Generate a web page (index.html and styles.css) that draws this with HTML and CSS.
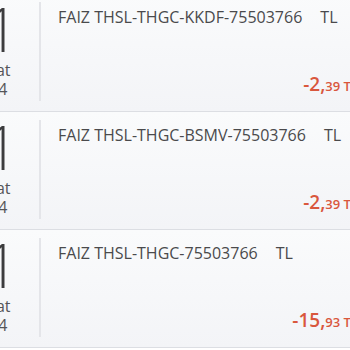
FILE: index.html
```html
<!DOCTYPE html>
<html lang="tr">
<head>
<meta charset="utf-8">
<link rel="stylesheet" href="styles.css">
</head>
<body>
<div class="list">
  <div class="row">
    <div class="date"><span class="day">1</span><span class="month">Şubat</span><span class="year">2024</span></div>
    <div class="divider"></div>
    <div class="content">
      <div class="desc">FAIZ THSL-THGC-KKDF-75503766<span class="cur">TL</span></div>
      <div class="amount"><span class="big">-2,</span><span class="small">39 TL</span></div>
    </div>
  </div>
  <div class="row">
    <div class="date"><span class="day">1</span><span class="month">Şubat</span><span class="year">2024</span></div>
    <div class="divider"></div>
    <div class="content">
      <div class="desc">FAIZ THSL-THGC-BSMV-75503766<span class="cur">TL</span></div>
      <div class="amount"><span class="big">-2,</span><span class="small">39 TL</span></div>
    </div>
  </div>
  <div class="row">
    <div class="date"><span class="day">1</span><span class="month">Şubat</span><span class="year">2024</span></div>
    <div class="divider"></div>
    <div class="content">
      <div class="desc">FAIZ THSL-THGC-75503766<span class="cur">TL</span></div>
      <div class="amount"><span class="big">-15,</span><span class="small">93 TL</span></div>
    </div>
  </div>
</div>
</body>
</html>
```
FILE: styles.css
```css
html, body {
  margin: 0;
  padding: 0;
  background: #ffffff;
  overflow: hidden;
  width: 350px;
  height: 350px;
}
body {
  font-family: "Open Sans", "Noto Sans", sans-serif;
  color: #4a4a4c;
}
.list {
  margin-left: -40px;
  margin-top: -6px;
  width: 400px;
  display: flex;
  flex-direction: column;
}
.row {
  display: flex;
  border-bottom: 1px solid #dcdee3;
  background: linear-gradient(#fafbfc, #f3f4f7);
  box-sizing: border-box;
  height: 118px;
}
.date {
  width: 58px;
  display: flex;
  flex-direction: column;
  align-items: center;
  padding-top: 4px;
  color: #3c3c3e;
}
.day {
  font-size: 60px;
  font-weight: 300;
  line-height: 63px;
  margin-left: 25px;
}
.month, .year {
  font-size: 16px;
  line-height: 19px;
  font-weight: 400;
  color: #555558;
}
.divider {
  width: 2px;
  margin: 8px 0 10px 21px;
  background: #e4e5e9;
}
.content {
  flex: 1;
  display: flex;
  flex-direction: column;
  justify-content: space-between;
  padding: 13px 0 14px 17px;
}
.desc {
  font-size: 16px;
  line-height: 20px;
  white-space: nowrap;
}
.cur {
  margin-left: 18px;
}
.amount {
  align-self: flex-end;
  margin-right: 2px;
  color: #d9573d;
  font-weight: 600;
  white-space: nowrap;
  line-height: 22px;
}
.big {
  font-size: 19px;
}
.small {
  font-size: 13px;
}
```
